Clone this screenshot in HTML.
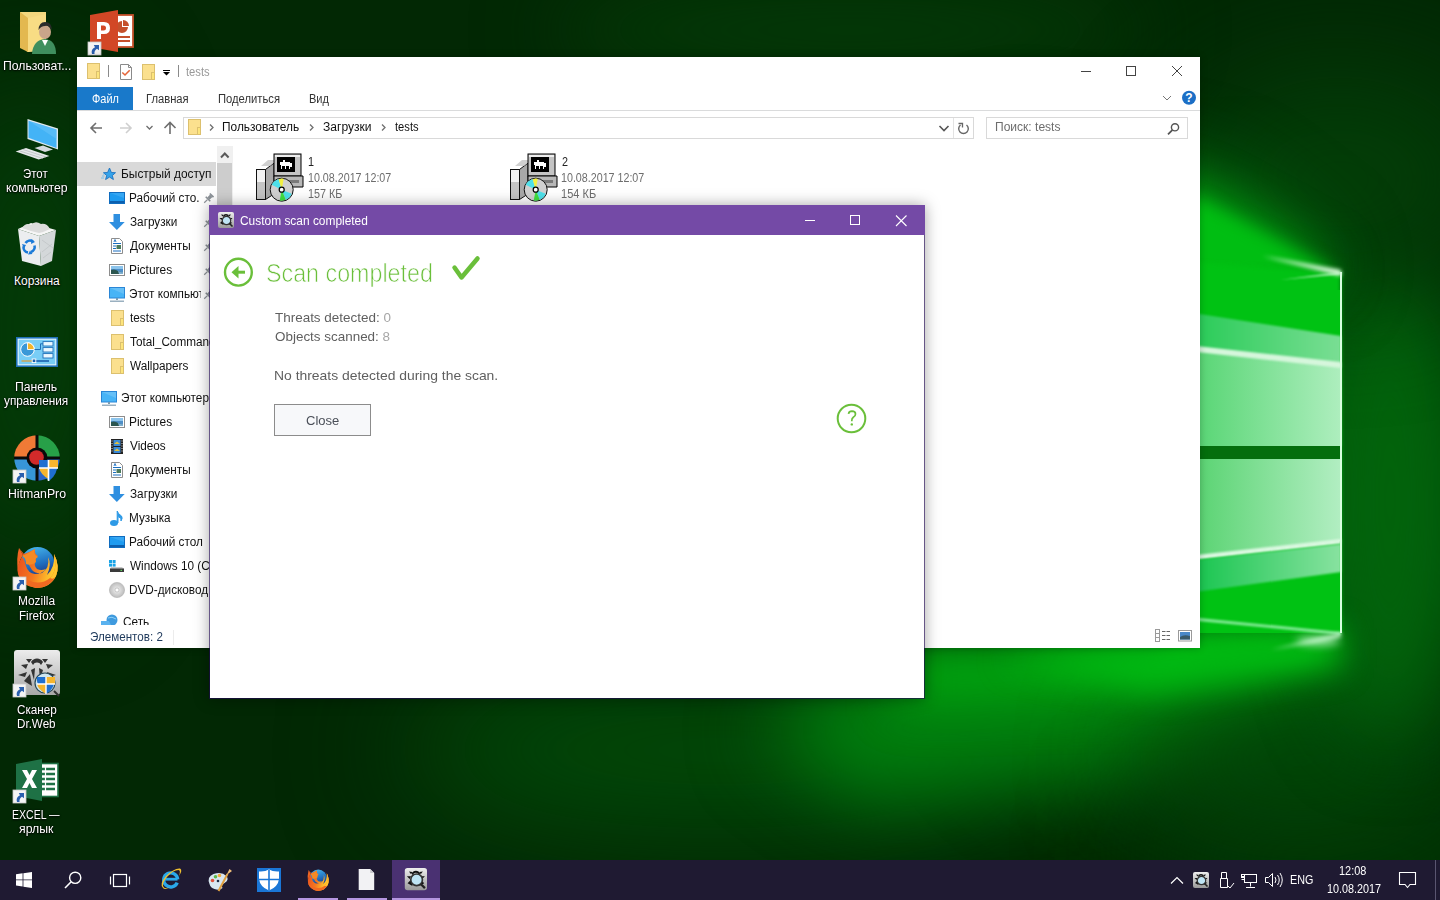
<!DOCTYPE html>
<html><head><meta charset="utf-8"><style>
*{margin:0;padding:0;box-sizing:border-box}
html,body{width:1440px;height:900px;overflow:hidden;background:#052808;font-family:"Liberation Sans",sans-serif}
.a{position:absolute}
.t{position:absolute;white-space:nowrap;line-height:1;transform-origin:0 0}
.dl{color:#fff;text-shadow:0 0 2px #000,0 1px 2px #000}
svg{position:absolute;overflow:visible}
</style></head><body>
<svg class="a" style="left:0;top:0" width="1440" height="900" viewBox="0 0 1440 900">
 <defs><filter id="b1" color-interpolation-filters="sRGB" filterUnits="userSpaceOnUse" x="-200" y="-200" width="1840" height="1300"><feGaussianBlur stdDeviation="1"/></filter><filter id="b2" color-interpolation-filters="sRGB" filterUnits="userSpaceOnUse" x="-200" y="-200" width="1840" height="1300"><feGaussianBlur stdDeviation="2"/></filter><filter id="b4" color-interpolation-filters="sRGB" filterUnits="userSpaceOnUse" x="-200" y="-200" width="1840" height="1300"><feGaussianBlur stdDeviation="4"/></filter><filter id="b8" color-interpolation-filters="sRGB" filterUnits="userSpaceOnUse" x="-200" y="-200" width="1840" height="1300"><feGaussianBlur stdDeviation="8"/></filter><filter id="b15" color-interpolation-filters="sRGB" filterUnits="userSpaceOnUse" x="-200" y="-200" width="1840" height="1300"><feGaussianBlur stdDeviation="15"/></filter><filter id="b25" color-interpolation-filters="sRGB" filterUnits="userSpaceOnUse" x="-200" y="-200" width="1840" height="1300"><feGaussianBlur stdDeviation="25"/></filter><filter id="b40" color-interpolation-filters="sRGB" filterUnits="userSpaceOnUse" x="-200" y="-200" width="1840" height="1300"><feGaussianBlur stdDeviation="40"/></filter><filter id="b60" color-interpolation-filters="sRGB" filterUnits="userSpaceOnUse" x="-200" y="-200" width="1840" height="1300"><feGaussianBlur stdDeviation="60"/></filter><filter id="b80" color-interpolation-filters="sRGB" filterUnits="userSpaceOnUse" x="-200" y="-200" width="1840" height="1300"><feGaussianBlur stdDeviation="80"/></filter>
  <linearGradient id="pane1" gradientUnits="userSpaceOnUse" x1="1200" y1="0" x2="1341" y2="0"><stop offset="0" stop-color="#5ad676"/><stop offset="1" stop-color="#aeeebe"/></linearGradient>
  <linearGradient id="band1" gradientUnits="userSpaceOnUse" x1="1200" y1="0" x2="1341" y2="0"><stop offset="0" stop-color="#2ccc5a"/><stop offset="1" stop-color="#7ade94"/></linearGradient>
  <linearGradient id="pane2" gradientUnits="userSpaceOnUse" x1="1200" y1="0" x2="1341" y2="0"><stop offset="0" stop-color="#5cd474"/><stop offset="1" stop-color="#b2eec2"/></linearGradient>
  <linearGradient id="band2" gradientUnits="userSpaceOnUse" x1="1200" y1="0" x2="1341" y2="0"><stop offset="0" stop-color="#1cc652"/><stop offset="1" stop-color="#88e2a0"/></linearGradient>
 </defs>
 <rect width="1440" height="900" fill="#022804"/>
 <ellipse cx="850" cy="30" rx="300" ry="45" fill="#043a07" filter="url(#b40)"/>
 <ellipse cx="30" cy="330" rx="90" ry="260" fill="#043c08" filter="url(#b60)"/>
 <ellipse cx="720" cy="750" rx="320" ry="80" fill="#024a08" filter="url(#b60)"/>
 <ellipse cx="1250" cy="520" rx="240" ry="240" fill="#025a0c" filter="url(#b80)"/>
 <polygon points="1341,636 1200,645 860,660 760,730 860,800 1120,780 1360,680" fill="#00800e" filter="url(#b40)"/>
 <polygon points="1341,636 1200,643 900,650 900,700 1250,690" fill="#00b010" filter="url(#b25)"/>
 <polygon points="1341,636 1180,644 1150,665 1300,660" fill="#00cc12" filter="url(#b8)"/>
 <ellipse cx="1360" cy="860" rx="220" ry="90" fill="#013204" filter="url(#b60)"/>
 <ellipse cx="1300" cy="760" rx="160" ry="60" fill="#024a08" filter="url(#b60)"/>
 <ellipse cx="1390" cy="500" rx="70" ry="240" fill="#02640c" filter="url(#b40)"/>
 <polygon points="1341,628 1341,668 1150,692 1000,660 1150,640" fill="#00b812" filter="url(#b15)"/>
 <ellipse cx="1340" cy="180" rx="160" ry="110" fill="#033e08" filter="url(#b60)"/>
 <polygon points="1341,272 1220,180 1000,130 1000,300" fill="#027c10" filter="url(#b40)"/>
 <polygon points="1341,274 1195,195 1000,140 1000,300" fill="#00b010" filter="url(#b25)"/>
 <polygon points="1341,274 1200,200 1100,200 1100,290" fill="#00be12" filter="url(#b8)"/>
 <polygon points="1000,250 1341,272 1341,633 1000,615" fill="#00c213" filter="url(#b2)"/>
 <rect x="1200" y="290" width="141" height="343" fill="#00c213"/>
 <polygon points="1000,283 1341,336 1341,446 1000,446" fill="url(#band1)" filter="url(#b1)"/>
 <polygon points="1000,329 1341,364 1341,446 1000,446" fill="url(#pane1)"/>
 <polygon points="1000,324 1341,362 1341,368 1000,330" fill="#d6f6dc" filter="url(#b1)"/>
 <polygon points="1000,459 1341,459 1341,541 1000,579" fill="url(#pane2)"/>
 <polygon points="1000,577 1341,539 1341,544 1000,582" fill="#dcf8e2" filter="url(#b1)"/>
 <polygon points="1000,582 1341,544 1341,572 1000,619" fill="url(#band2)" filter="url(#b1)"/>
 <rect x="1000" y="446" width="341" height="13" fill="#046e0d"/>
 <polygon points="1000,598 1341,632 1341,635 1000,602" fill="#7ce890" filter="url(#b1)"/>
 <rect x="1340" y="272" width="2" height="361" fill="#d8ffe0"/>
 <polygon points="1341,270 1262,256 1341,276" fill="#e8ffe8" filter="url(#b2)"/><polygon points="1341,272 1280,280 1341,274" fill="#c8f8d0" filter="url(#b1)"/>
 <ellipse cx="1318" cy="641" rx="22" ry="4" fill="#b8f0c0" filter="url(#b4)"/><polygon points="1341,633 1270,650 1341,637" fill="#d8ffe0" filter="url(#b2)"/>
</svg>
<svg class="a" style="left:0;top:0" width="1440" height="900"><g transform="translate(20,12)"><polygon points="0,0 26,0 26,38 7,40" fill="#f3d77e"/><polygon points="0,0 8,6 8,40 0,36" fill="#e3b850"/><polygon points="8,6 26,2 26,38 8,40" fill="#f8dc84"/><path d="M12 42 Q13 28 25 27 Q36 28 36 42Z" fill="#3f8f5e"/><path d="M22 28 L25 34 L28 28Z" fill="#fff"/><ellipse cx="25" cy="20" rx="6" ry="7" fill="#c9a58a"/><path d="M18.5 18 Q19 10 25 10 Q32 10 31.5 18 Q29 13 25 14 Q21 14 18.5 18Z" fill="#2b2b2b"/></g><g transform="translate(90,10)"><rect x="22" y="5" width="21" height="32" fill="#fff" stroke="#c5502b" stroke-width="1.8"/><path d="M32 11 A6 6 0 1 0 38 17 H32Z" fill="#c5502b"/><path d="M33 10 A6 6 0 0 1 39 16 H33Z" fill="#c5502b"/><path d="M26 27h14M26 31h14" stroke="#c5502b" stroke-width="1.8"/><polygon points="0,5 28,0 28,42 0,37" fill="#d24726"/><path d="M7 29 V12 H14 Q20 12 20 18 Q20 24 14 24 H11 V29Z M11 15.5 V20.5 H13.5 Q16 20.5 16 18 Q16 15.5 13.5 15.5Z" fill="#fff"/></g><g transform="translate(88,42) scale(1.0)"><rect x="0" y="0" width="13" height="13" fill="#f4f4f4" stroke="#c8c8c8" stroke-width=".8"/><path d="M4 12 Q2.5 7.5 7 5.2 L5.8 3 H11 V8.2 L9 6.8 Q6 8.5 6.5 12Z" fill="#2a5fae"/></g><g transform="translate(15,119)"><polygon points="12.5,0 43,9.5 43,30.5 12.5,20" fill="#dfe8ee"/><polygon points="13.5,1.8 41.5,10.6 41.5,29 13.5,18.8" fill="#43b3f6"/><polygon points="13.5,1.8 41.5,10.6 41.5,20 " fill="#6cc6fa" opacity=".5"/><polygon points="19.5,29 28,26.5 38,30.5 30,33" fill="#d6dade"/><polygon points="0.6,32.5 11,29 34.4,37 23.7,40.5" fill="#e6e8ea"/><path d="M5 32 L28 39.5 M8 30.5 L31 38" stroke="#aab0b4" stroke-width=".6"/></g><g transform="translate(0,0)"><polygon points="18,229 39,236 41,266 22,261" fill="#eceef0"/><polygon points="39,236 56,230 52,261 41,266" fill="#d4d8da"/><path d="M42 240 L53 248 M42 252 L52 244 M43 258 L51 252" stroke="#c0c4c6" stroke-width=".8"/><polygon points="18,229 31,223 56,230 39,236" fill="#f6f6f6"/><path d="M22 228 Q26 222 31 225 Q35 220 41 224 Q47 223 50 229 Q44 232 39 233 Q30 231 22 228Z" fill="#dcdcdc"/><path d="M25.5 243 A5.5 5.5 0 0 1 33 241.5" fill="none" stroke="#1a7ad8" stroke-width="2.6"/><path d="M34.5 245.5 A5.5 5.5 0 0 1 31 252" fill="none" stroke="#1a7ad8" stroke-width="2.6"/><path d="M28 252.5 A5.5 5.5 0 0 1 23.5 246.5" fill="none" stroke="#1a7ad8" stroke-width="2.6"/><path d="M31.5 239 L35 242 L31 244Z M32.5 254 L28 254.5 L30 250.5Z M22 244 L24 248.5 L26 245Z" fill="#1a7ad8"/></g><g transform="translate(16,337)"><rect x="0" y="0" width="42" height="30" fill="#1f70b8"/><rect x="2.2" y="2.2" width="37.6" height="25.6" fill="#78cdf6" stroke="#e0f6ff" stroke-width="1.2"/><circle cx="11.5" cy="12.5" r="6.8" fill="#3a98d8" stroke="#fff" stroke-width="1"/><path d="M11.5 12.5 V5.7 A6.8 6.8 0 0 1 18.3 12.5Z" fill="#f2b42a" stroke="#fff" stroke-width=".9"/><path d="M18.5 12.5 H24.5 V6.8 H27" fill="none" stroke="#1f70b8" stroke-width="1"/><rect x="27" y="4.6" width="10" height="4.4" fill="#eaf8ff" stroke="#1f70b8" stroke-width=".9"/><rect x="27" y="10.6" width="10" height="4.4" fill="#eaf8ff" stroke="#1f70b8" stroke-width=".9"/><rect x="27" y="16.6" width="10" height="4.4" fill="#eaf8ff" stroke="#1f70b8" stroke-width=".9"/><path d="M5.5 24 H16.5" stroke="#c8a860" stroke-width="1.6"/><path d="M19.5 24 H33" stroke="#1a60b0" stroke-width="1.6"/><rect x="16.2" y="22" width="3.6" height="3.6" fill="#1a60b0" stroke="#fff" stroke-width=".9"/></g><g transform="translate(14,435)"><path d="M23 23 V0.2 A22.8 22.8 0 0 0 0.2 23Z" fill="#f07a36"/><path d="M23 23 V0.2 A22.8 22.8 0 0 1 45.8 23Z" fill="#27a048"/><path d="M23 23 H0.2 A22.8 22.8 0 0 0 23 45.8Z" fill="#3795d8"/><path d="M23 23 H45.8 A22.8 22.8 0 0 1 23 45.8Z" fill="#2b66c8"/><path d="M23 0 V46 M0 23 H46" stroke="#0a0a0a" stroke-width="3"/><circle cx="23" cy="23" r="10.5" fill="#0a0a0a"/><circle cx="22.5" cy="22.5" r="7.3" fill="#d22a2a"/><path d="M25 25 H44 Q44 40 35 46 Q27 40 25 33Z" fill="#1f6fd0"/><path d="M34.5 25 H44 V33 H34.5Z M25 33 H34.5 V44 Q27 40 25 33Z" fill="#f6b52e"/><path d="M34.5 25 V46 M25 33 H44" stroke="#fff" stroke-width="1.6"/></g><g transform="translate(13,470) scale(1.0)"><rect x="0" y="0" width="13" height="13" fill="#f4f4f4" stroke="#c8c8c8" stroke-width=".8"/><path d="M4 12 Q2.5 7.5 7 5.2 L5.8 3 H11 V8.2 L9 6.8 Q6 8.5 6.5 12Z" fill="#2a5fae"/></g><g transform="translate(14,544)"><defs><linearGradient id="ffg" x1="0" y1="0" x2="1" y2=".3"><stop offset="0" stop-color="#e8481e"/><stop offset=".55" stop-color="#f47a20"/><stop offset="1" stop-color="#ffd02e"/></linearGradient><linearGradient id="ffb" x1="0" y1="0" x2=".3" y2="1"><stop offset="0" stop-color="#4cc0f2"/><stop offset=".6" stop-color="#1f6fc0"/><stop offset="1" stop-color="#1a2f80"/></linearGradient></defs><circle cx="23.5" cy="20" r="17" fill="url(#ffb)"/><path d="M5 4 L10 10 Q16 8 21 5 Q20 10 24 12 Q21 14 22 17 Q19 21 23 25 Q27 27 32 25 Q28 30 21 30 Q14 29 12 22 Q10 14 8 13 Q2 22 4 30 Q8 42 22 44 Q36 44 42 32 Q46 22 40 10 Q41 24 33 31 Q38 20 34 13 Q36 24 28 29 Q22 30 18 26" fill="url(#ffg)"/><path d="M4 30 Q8 42 22 44 Q36 44 42 32 Q46 22 40 10 Q44 26 36 34 Q26 42 14 36 Q6 32 4 30Z" fill="#f06a22"/><path d="M40 10 Q46 22 42 32 Q40 36 36 34 Q44 26 40 10Z" fill="#ffc62e"/><path d="M5 4 L9 11 Q4 18 4 28 Q2 14 5 4Z" fill="#f26522"/><path d="M21 5 Q19 11 24 13 Q20 15 22 18 Q18 22 12 20 Q12 13 8 12 Q15 9 21 5Z" fill="#f58a24"/></g><g transform="translate(13,577) scale(1.0)"><rect x="0" y="0" width="13" height="13" fill="#f4f4f4" stroke="#c8c8c8" stroke-width=".8"/><path d="M4 12 Q2.5 7.5 7 5.2 L5.8 3 H11 V8.2 L9 6.8 Q6 8.5 6.5 12Z" fill="#2a5fae"/></g><g transform="translate(14,650)"><defs><linearGradient id="dwg" x1="0" y1="0" x2="0" y2="1"><stop offset="0" stop-color="#ececec"/><stop offset="1" stop-color="#a8a8a8"/></linearGradient></defs><rect x="0" y="0" width="46" height="45" rx="3" fill="url(#dwg)"/><path d="M17 12 A7 7 0 0 1 29 12 L27 15 A4.5 4.5 0 0 0 19 15Z" fill="#333"/><path d="M12 9 L18 9 L15 13Z M28 9 L34 9 L31 13Z M7 15 L14 14 L12 19Z M32 14 L39 15 L34 19Z M4 25 L13 22 L11 27Z M33 22 L42 25 L35 27Z" fill="#333"/><path d="M10 31 L16 24 L18 36Z M36 31 L30 24 L28 36Z M17 20 L21 18 L20 30Z M29 20 L25 18 L26 30Z" fill="#333"/><circle cx="31" cy="33" r="10" fill="#cfe6f0" stroke="#2a4a5a" stroke-width="1.2"/><path d="M23 27 H41 Q41 39 32 44 Q24 39 23 31Z" fill="#1f6fd0"/><path d="M32 27 H41 V34 H32Z M23 34 H32 V44 Q24 39 23 34Z" fill="#f6b52e"/><path d="M32 27 V44 M23 34 H41" stroke="#fff" stroke-width="1.4"/><path d="M40 41 L45 46" stroke="#333" stroke-width="2"/></g><g transform="translate(13,684) scale(1.0)"><rect x="0" y="0" width="13" height="13" fill="#f4f4f4" stroke="#c8c8c8" stroke-width=".8"/><path d="M4 12 Q2.5 7.5 7 5.2 L5.8 3 H11 V8.2 L9 6.8 Q6 8.5 6.5 12Z" fill="#2a5fae"/></g><g transform="translate(16,759)"><rect x="22" y="4.5" width="20" height="33" fill="#fff" stroke="#1e7145" stroke-width="1.6"/><path d="M25 10h14M25 15h14M25 20h14M25 25h14M25 30h14" stroke="#1e7145" stroke-width="2.4"/><path d="M29.5 8V33" stroke="#fff" stroke-width="1.2"/><polygon points="0,5 26,0 26,42 0,37" fill="#1e7145"/><path d="M6 11 H11 L13.5 16 L16 11 H21 L16 20 L21 29 H16 L13.5 24 L11 29 H6 L11 20Z" fill="#fff"/></g><g transform="translate(13,790) scale(1.0)"><rect x="0" y="0" width="13" height="13" fill="#f4f4f4" stroke="#c8c8c8" stroke-width=".8"/><path d="M4 12 Q2.5 7.5 7 5.2 L5.8 3 H11 V8.2 L9 6.8 Q6 8.5 6.5 12Z" fill="#2a5fae"/></g></svg>
<div class="dl"><div class='t' style='left:3.38px;top:60.00px;font-size:12px;color:#fff;font-weight:400;transform:scaleX(1.0185);'>Пользоват...</div>
<div class='t' style='left:23.05px;top:168.00px;font-size:12px;color:#fff;font-weight:400;transform:scaleX(0.9520);'>Этот</div>
<div class='t' style='left:5.60px;top:182.00px;font-size:12px;color:#fff;font-weight:400;transform:scaleX(1.0183);'>компьютер</div>
<div class='t' style='left:14.00px;top:274.50px;font-size:12px;color:#fff;font-weight:400;transform:scaleX(1.0000);'>Корзина</div>
<div class='t' style='left:14.98px;top:381.00px;font-size:12px;color:#fff;font-weight:400;transform:scaleX(1.0175);'>Панель</div>
<div class='t' style='left:4.00px;top:395.00px;font-size:12px;color:#fff;font-weight:400;transform:scaleX(0.9815);'>управления</div>
<div class='t' style='left:7.88px;top:488.00px;font-size:12px;color:#fff;font-weight:400;transform:scaleX(1.0232);'>HitmanPro</div>
<div class='t' style='left:17.91px;top:595.00px;font-size:12px;color:#fff;font-weight:400;transform:scaleX(0.9919);'>Mozilla</div>
<div class='t' style='left:18.63px;top:610.00px;font-size:12px;color:#fff;font-weight:400;transform:scaleX(0.9667);'>Firefox</div>
<div class='t' style='left:17.30px;top:703.50px;font-size:12px;color:#fff;font-weight:400;transform:scaleX(0.9756);'>Сканер</div>
<div class='t' style='left:16.83px;top:718.00px;font-size:12px;color:#fff;font-weight:400;transform:scaleX(0.9692);'>Dr.Web</div>
<div class='t' style='left:12.42px;top:809.00px;font-size:12px;color:#fff;font-weight:400;transform:scaleX(0.8778);'>EXCEL —</div>
<div class='t' style='left:19.30px;top:823.00px;font-size:12px;color:#fff;font-weight:400;transform:scaleX(1.0206);'>ярлык</div></div>
<div class="a" style="left:77px;top:57px;width:1123px;height:591px;background:#fff;box-shadow:0 0 7px rgba(0,0,0,.25)"></div>
<div class="a" style="left:77px;top:87px;width:56px;height:23px;background:#1979ca"></div>
<div class="a" style="left:77px;top:110px;width:1123px;height:1px;background:#dadbdc"></div>
<div class="a" style="left:183px;top:117px;width:791px;height:22px;border:1px solid #d9d9d9"></div>
<div class="a" style="left:953px;top:118px;width:1px;height:20px;background:#e3e3e3"></div>
<div class="a" style="left:986px;top:117px;width:202px;height:22px;border:1px solid #d9d9d9"></div>
<div class="a" style="left:77px;top:162px;width:139px;height:24px;background:#d9d9d9"></div>
<div class="a" style="left:217px;top:146px;width:16px;height:479px;background:#f0f0f0"></div>
<div class="a" style="left:217px;top:163px;width:15px;height:90px;background:#cdcdcd"></div>
<svg class="a" style="left:0;top:0" width="1440" height="900"><g clip-path="url(#navclip)"><rect x="87.5" y="63.5" width="12" height="15" fill="#fbe08e" stroke="#dcc06e"/><rect x="96.5" y="71.5" width="3" height="7" fill="#fde57c" stroke="#dcc06e"/><path d="M108.5 65V77 M178.5 65V77" stroke="#8a8a8a" stroke-width="1"/><path d="M120.5 64.5H128.5L131.5 67.5V79.5H120.5Z" fill="#fff" stroke="#8a8a8a"/><path d="M128.5 64.5V67.5H131.5" fill="none" stroke="#8a8a8a"/><path d="M122.3 72.5L125 75L129.7 70.3" fill="none" stroke="#e5663a" stroke-width="1.6"/><rect x="142.5" y="64.5" width="12" height="15" fill="#fbe08e" stroke="#dcc06e"/><rect x="151.5" y="72.5" width="3" height="7" fill="#fde57c" stroke="#dcc06e"/><path d="M163 70.5H170" stroke="#000"/><path d="M163 72H170L166.5 75.5Z" fill="#000"/><path d="M1081 71.5H1091" stroke="#444"/><rect x="1126.5" y="66.5" width="9" height="9" fill="none" stroke="#444"/><path d="M1172 66L1182 76M1182 66L1172 76" stroke="#444" stroke-width="1"/><path d="M1163 96L1167 100L1171 96" fill="none" stroke="#777" stroke-width="1"/><circle cx="1189" cy="97.8" r="7" fill="#1c6fc6"/><text x="1189" y="102.3" font-family="Liberation Sans" font-weight="700" font-size="12" fill="#fff" text-anchor="middle">?</text><path d="M102 128H91M96 123L91 128L96 133" fill="none" stroke="#6e6e6e" stroke-width="1.6"/><path d="M120 128H131M126 123L131 128L126 133" fill="none" stroke="#cfcfcf" stroke-width="1.6"/><path d="M146.5 126L149.5 129L152.5 126" fill="none" stroke="#6e6e6e" stroke-width="1.3"/><path d="M170 134V122.5M164.5 128L170 122.5L175.5 128" fill="none" stroke="#6e6e6e" stroke-width="1.6"/><rect x="188.5" y="119.5" width="12" height="15" fill="#fbe08e" stroke="#dcc06e"/><rect x="197.5" y="127.5" width="3" height="7" fill="#fde57c" stroke="#dcc06e"/><path d="M210.0 124.5L213.0 127.5L210.0 130.5" fill="none" stroke="#707070" stroke-width="1.3"/><path d="M310.0 124.5L313.0 127.5L310.0 130.5" fill="none" stroke="#707070" stroke-width="1.3"/><path d="M382.0 124.5L385.0 127.5L382.0 130.5" fill="none" stroke="#707070" stroke-width="1.3"/><path d="M939.5 126L944 130.5L948.5 126" fill="none" stroke="#555" stroke-width="1.6"/><path d="M960.5 125A4.8 4.8 0 1 0 966.5 125" fill="none" stroke="#666" stroke-width="1.4"/><path d="M958.5 123.5H962.5V127.5" fill="none" stroke="#666" stroke-width="1.3"/><circle cx="1175" cy="127.3" r="3.6" fill="none" stroke="#555" stroke-width="1.4"/><path d="M1172.5 129.8L1168 134.3" stroke="#555" stroke-width="1.8"/><path d="M221 157.5L224.8 153.5L228.6 157.5" fill="none" stroke="#5a5a5a" stroke-width="2"/><g transform="translate(101,167.5)"><path d="M8.5 0.5 L10.4 5 L14.5 5.2 L11.3 8 L12.4 12 L8.5 9.6 L4.6 12 L5.7 8 L2.5 5.2 L6.6 5Z" fill="#35a3ea" stroke="#1c72c0" stroke-width="0.9"/><path d="M0 10.5h3 M1 8.5h2.5 M2 6.5h1.5" stroke="#5eb8f0" stroke-width="0.8"/></g><g transform="translate(109,192)"><rect x=".5" y=".5" width="15" height="11" fill="#1e9bf0" stroke="#0f6cbf"/><rect x="1" y="9" width="14" height="2" fill="#0c5fae"/><path d="M1 1 L15 1 L15 6 Z" fill="#4db4f5" opacity=".5"/></g><g transform="translate(208,199) rotate(45)" fill="#8c9298"><rect x="-2.6" y="-6" width="5.2" height="1.6"/><rect x="-1.6" y="-4.6" width="3.2" height="4"/><rect x="-3.2" y="-0.8" width="6.4" height="1.6"/><rect x="-0.6" y="0.8" width="1.2" height="4.5"/></g><g transform="translate(208,223) rotate(45)" fill="#8c9298"><rect x="-2.6" y="-6" width="5.2" height="1.6"/><rect x="-1.6" y="-4.6" width="3.2" height="4"/><rect x="-3.2" y="-0.8" width="6.4" height="1.6"/><rect x="-0.6" y="0.8" width="1.2" height="4.5"/></g><g transform="translate(208,247) rotate(45)" fill="#8c9298"><rect x="-2.6" y="-6" width="5.2" height="1.6"/><rect x="-1.6" y="-4.6" width="3.2" height="4"/><rect x="-3.2" y="-0.8" width="6.4" height="1.6"/><rect x="-0.6" y="0.8" width="1.2" height="4.5"/></g><g transform="translate(208,271) rotate(45)" fill="#8c9298"><rect x="-2.6" y="-6" width="5.2" height="1.6"/><rect x="-1.6" y="-4.6" width="3.2" height="4"/><rect x="-3.2" y="-0.8" width="6.4" height="1.6"/><rect x="-0.6" y="0.8" width="1.2" height="4.5"/></g><g transform="translate(208,295) rotate(45)" fill="#8c9298"><rect x="-2.6" y="-6" width="5.2" height="1.6"/><rect x="-1.6" y="-4.6" width="3.2" height="4"/><rect x="-3.2" y="-0.8" width="6.4" height="1.6"/><rect x="-0.6" y="0.8" width="1.2" height="4.5"/></g><g transform="translate(109,214)"><path d="M4.5 0 H11 V8 H15.7 L7.85 16 L0 8 H4.5Z" fill="#2f8fe0"/></g><g transform="translate(111,238)"><path d="M.5 .5 H8.5 L11.5 3.5 V15.5 H.5Z" fill="#fff" stroke="#8d8d8d"/><path d="M2 5.5h8 M2 8h3 M2 10.5h3 M2 13h8" stroke="#1b6fc1" stroke-width="1"/><rect x="5.5" y="7" width="4.5" height="4" fill="#4a7a5a"/><path d="M3 4 L4 1.5 L5 4" stroke="#1b6fc1" fill="none" stroke-width=".9"/></g><g transform="translate(109,264)"><rect x=".5" y=".5" width="15" height="11" fill="#fff" stroke="#8d8d8d"/><rect x="2" y="2" width="12" height="8" fill="#4f8fc8"/><rect x="2" y="2" width="12" height="3" fill="#8cc4ec"/><path d="M2 6 Q6 4.5 9 7 Q12 8.5 14 8 V10 H2Z" fill="#2c5650"/><path d="M9 7 Q12 8.5 14 8 V10 H10Z" fill="#7fb0d0"/></g><g transform="translate(109,287)"><rect x=".5" y=".5" width="15" height="10.5" fill="#48b4f6" stroke="#2a86d6"/><path d="M1 1 L15 1 L15 7Z" fill="#7cc8f8" opacity=".6"/><rect x="7" y="11" width="2" height="2" fill="#7a9ab0"/><rect x="1" y="13.5" width="14" height="1.5" fill="#9ab0c0"/></g><rect x="111.5" y="310.5" width="12" height="15" fill="#fbe08e" stroke="#dcc06e"/><rect x="120.5" y="318.5" width="3" height="7" fill="#fde57c" stroke="#dcc06e"/><rect x="111.5" y="334.5" width="12" height="15" fill="#fbe08e" stroke="#dcc06e"/><rect x="120.5" y="342.5" width="3" height="7" fill="#fde57c" stroke="#dcc06e"/><rect x="111.5" y="358.5" width="12" height="15" fill="#fbe08e" stroke="#dcc06e"/><rect x="120.5" y="366.5" width="3" height="7" fill="#fde57c" stroke="#dcc06e"/><g transform="translate(101,391)"><rect x=".5" y=".5" width="15" height="10.5" fill="#48b4f6" stroke="#2a86d6"/><path d="M1 1 L15 1 L15 7Z" fill="#7cc8f8" opacity=".6"/><rect x="7" y="11" width="2" height="2" fill="#7a9ab0"/><rect x="1" y="13.5" width="14" height="1.5" fill="#9ab0c0"/></g><g transform="translate(109,416)"><rect x=".5" y=".5" width="15" height="11" fill="#fff" stroke="#8d8d8d"/><rect x="2" y="2" width="12" height="8" fill="#4f8fc8"/><rect x="2" y="2" width="12" height="3" fill="#8cc4ec"/><path d="M2 6 Q6 4.5 9 7 Q12 8.5 14 8 V10 H2Z" fill="#2c5650"/><path d="M9 7 Q12 8.5 14 8 V10 H10Z" fill="#7fb0d0"/></g><g transform="translate(109,439)"><rect x="2" y="0" width="12" height="15" fill="#222"/><rect x="4.5" y="1" width="7" height="6" fill="#3a8ad8"/><rect x="4.5" y="8" width="7" height="6" fill="#3a8ad8"/><path d="M5 5 L8 2.5 L11 5Z M5 12 L8 9.5 L11 12Z" fill="#e0c040"/><path d="M3 1.5v12 M13 1.5v12" stroke="#ddd" stroke-width="1" stroke-dasharray="1 1.5"/></g><g transform="translate(111,462)"><path d="M.5 .5 H8.5 L11.5 3.5 V15.5 H.5Z" fill="#fff" stroke="#8d8d8d"/><path d="M2 5.5h8 M2 8h3 M2 10.5h3 M2 13h8" stroke="#1b6fc1" stroke-width="1"/><rect x="5.5" y="7" width="4.5" height="4" fill="#4a7a5a"/><path d="M3 4 L4 1.5 L5 4" stroke="#1b6fc1" fill="none" stroke-width=".9"/></g><g transform="translate(109,486)"><path d="M4.5 0 H11 V8 H15.7 L7.85 16 L0 8 H4.5Z" fill="#2f8fe0"/></g><g transform="translate(109,510)"><ellipse cx="5" cy="13" rx="4" ry="3" fill="#2e9ae6"/><path d="M8.2 13 V1 Q9 4 12.5 6 Q14 8 12 11 Q13 8 9 6.5 V13" fill="#2e9ae6" stroke="#2e9ae6" stroke-width="1"/></g><g transform="translate(109,536)"><rect x=".5" y=".5" width="15" height="11" fill="#1e9bf0" stroke="#0f6cbf"/><rect x="1" y="9" width="14" height="2" fill="#0c5fae"/><path d="M1 1 L15 1 L15 6 Z" fill="#4db4f5" opacity=".5"/></g><g transform="translate(109,560)"><rect x="0" y="0" width="3" height="3" fill="#19a3e6"/><rect x="3.6" y="0" width="3" height="3" fill="#19a3e6"/><rect x="0" y="3.6" width="3" height="3" fill="#19a3e6"/><rect x="3.6" y="3.6" width="3" height="3" fill="#19a3e6"/><path d="M2 7 H13 L15 9 H1Z" fill="#c8c8c8"/><rect x="1" y="8.5" width="14" height="3.5" fill="#3a3a3a"/><rect x="11.5" y="9.8" width="1.5" height="1.2" fill="#5ed05e"/></g><g transform="translate(109,582)"><defs><radialGradient id="dvdg"><stop offset="0" stop-color="#f4f4f4"/><stop offset="1" stop-color="#bcbcbc"/></radialGradient></defs><circle cx="8" cy="8" r="7.6" fill="url(#dvdg)" stroke="#b0b0b0" stroke-width=".6"/><circle cx="8" cy="8" r="2" fill="#fff" stroke="#aaa" stroke-width=".6"/></g><g clip-path="url(#netclip)"><g transform="translate(101,614)"><circle cx="11" cy="6" r="5.5" fill="#3f9ade"/><path d="M7 4 Q11 2 15 5" stroke="#8cd0f8" fill="none"/><path d="M0 7 H8 L10 11 H0Z" fill="#5ab2ef"/><rect x="0" y="11" width="12" height="1.5" fill="#1f6fb8"/></g></g><polygon points="255,166 260,166 266,160 275,160 275,166 274,200 255,200" fill="#fff"/><rect x="256.5" y="169.5" width="9" height="30" fill="#f2f2f2" stroke="#111" stroke-width="1"/><rect x="257" y="182" width="8" height="17" fill="#c4c4c4"/><polygon points="265.5,169.5 274,163 274,194 265.5,199.5" fill="#a8a8a8" stroke="#111" stroke-width="1"/><polygon points="255,166 261,166 268,160 276,160 270,166" fill="#d0d0d0"/><rect x="274" y="154" width="27" height="22" fill="#c4c4c4" stroke="#000" stroke-width="1"/><rect x="275" y="155" width="25" height="2" fill="#eee"/><rect x="277" y="157" width="18" height="15" fill="#000"/><path d="M280 162h3v-2h2v2h5v1h2v4h-2v2h-1v-3h-3v3h-1v-3h-3v3h-1v-4h-1z" fill="#fff"/><polygon points="274,176 303,176 303,187 291,187 291,184 274,184" fill="#b8b8b8" stroke="#000" stroke-width="1"/><rect x="285" y="180" width="14" height="3" fill="#7a7a7a"/><circle cx="281.7" cy="189.7" r="11.5" fill="#d0d0d0" stroke="#111" stroke-width="1"/><path d="M281.7 189.7 L271.7 184.7 A11 11 0 0 1 278.7 179.2Z" fill="#4ee0ea"/><path d="M281.7 189.7 L278.7 179.2 A11 11 0 0 1 283.7 178.7Z" fill="#f2f040"/><path d="M281.7 189.7 L291.7 193.7 A11 11 0 0 1 285.7 199.7Z" fill="#4ee0ea"/><path d="M281.7 189.7 L285.7 199.7 A11 11 0 0 1 279.7 200.7Z" fill="#3ee040"/><circle cx="281.7" cy="189.7" r="2.5" fill="#fff" stroke="#000" stroke-width="1.2"/><polygon points="509,166 514,166 520,160 529,160 529,166 528,200 509,200" fill="#fff"/><rect x="510.5" y="169.5" width="9" height="30" fill="#f2f2f2" stroke="#111" stroke-width="1"/><rect x="511" y="182" width="8" height="17" fill="#c4c4c4"/><polygon points="519.5,169.5 528,163 528,194 519.5,199.5" fill="#a8a8a8" stroke="#111" stroke-width="1"/><polygon points="509,166 515,166 522,160 530,160 524,166" fill="#d0d0d0"/><rect x="528" y="154" width="27" height="22" fill="#c4c4c4" stroke="#000" stroke-width="1"/><rect x="529" y="155" width="25" height="2" fill="#eee"/><rect x="531" y="157" width="18" height="15" fill="#000"/><path d="M534 162h3v-2h2v2h5v1h2v4h-2v2h-1v-3h-3v3h-1v-3h-3v3h-1v-4h-1z" fill="#fff"/><polygon points="528,176 557,176 557,187 545,187 545,184 528,184" fill="#b8b8b8" stroke="#000" stroke-width="1"/><rect x="539" y="180" width="14" height="3" fill="#7a7a7a"/><circle cx="535.7" cy="189.7" r="11.5" fill="#d0d0d0" stroke="#111" stroke-width="1"/><path d="M535.7 189.7 L525.7 184.7 A11 11 0 0 1 532.7 179.2Z" fill="#4ee0ea"/><path d="M535.7 189.7 L532.7 179.2 A11 11 0 0 1 537.7 178.7Z" fill="#f2f040"/><path d="M535.7 189.7 L545.7 193.7 A11 11 0 0 1 539.7 199.7Z" fill="#4ee0ea"/><path d="M535.7 189.7 L539.7 199.7 A11 11 0 0 1 533.7 200.7Z" fill="#3ee040"/><circle cx="535.7" cy="189.7" r="2.5" fill="#fff" stroke="#000" stroke-width="1.2"/><path d="M173.5 630V645" stroke="#ececec"/><rect x="1155.5" y="629.5" width="4" height="12" fill="#fff" stroke="#9a9a9a"/><path d="M1155.5 633.5h4M1155.5 637.5h4" stroke="#9a9a9a"/><path d="M1162 631.5h3.5M1166.5 631.5h3.5M1162 635.5h3.5M1166.5 635.5h3.5M1162 639.5h3.5M1166.5 639.5h3.5" stroke="#666" stroke-width="1"/><rect x="1178.5" y="630.5" width="13" height="10.5" fill="#fff" stroke="#9a9a9a"/><rect x="1180" y="632" width="10" height="7.5" fill="#4a88c8"/><path d="M1180 637 Q1184 634 1190 636V639.5H1180Z" fill="#3a5a6a"/></g><defs><clipPath id="navclip"><rect x="77" y="57" width="1123" height="591"/></clipPath><clipPath id="netclip"><rect x="77" y="146" width="140" height="479"/></clipPath></defs></svg>
<div class='t' style='left:186.40px;top:66.00px;font-size:12px;color:#999;font-weight:400;transform:scaleX(0.9360);'>tests</div>
<div class='t' style='left:91.80px;top:93.00px;font-size:12px;color:#fff;font-weight:400;transform:scaleX(0.9103);'>Файл</div>
<div class='t' style='left:146.47px;top:93.00px;font-size:12px;color:#333;font-weight:400;transform:scaleX(0.9341);'>Главная</div>
<div class='t' style='left:217.76px;top:93.00px;font-size:12px;color:#333;font-weight:400;transform:scaleX(0.9354);'>Поделиться</div>
<div class='t' style='left:308.58px;top:93.00px;font-size:12px;color:#333;font-weight:400;transform:scaleX(0.9190);'>Вид</div>
<div class='t' style='left:222.26px;top:121.00px;font-size:12px;color:#111;font-weight:400;transform:scaleX(0.9903);'>Пользователь</div>
<div class='t' style='left:323.25px;top:121.00px;font-size:12px;color:#111;font-weight:400;transform:scaleX(1.0052);'>Загрузки</div>
<div class='t' style='left:395.00px;top:121.00px;font-size:12px;color:#111;font-weight:400;transform:scaleX(0.9300);'>tests</div>
<div class='t' style='left:994.50px;top:121.00px;font-size:12px;color:#6d6d6d;font-weight:400;transform:scaleX(1.0031);'>Поиск: tests</div>
<div class='t' style='left:308.10px;top:156.00px;font-size:12px;color:#222;font-weight:400;transform:scaleX(0.9000);'>1</div>
<div class='t' style='left:308.11px;top:172.00px;font-size:12px;color:#6d6d6d;font-weight:400;transform:scaleX(0.8913);'>10.08.2017 12:07</div>
<div class='t' style='left:308.10px;top:188.00px;font-size:12px;color:#6d6d6d;font-weight:400;transform:scaleX(0.8973);'>157 КБ</div>
<div class='t' style='left:562.00px;top:156.00px;font-size:12px;color:#222;font-weight:400;transform:scaleX(0.9000);'>2</div>
<div class='t' style='left:561.11px;top:172.00px;font-size:12px;color:#6d6d6d;font-weight:400;transform:scaleX(0.8913);'>10.08.2017 12:07</div>
<div class='t' style='left:561.08px;top:188.00px;font-size:12px;color:#6d6d6d;font-weight:400;transform:scaleX(0.9189);'>154 КБ</div>
<div class='t' style='left:90.33px;top:631.00px;font-size:12px;color:#1e395b;font-weight:400;transform:scaleX(0.9689);'>Элементов: 2</div>
<div class="a" style="left:0;top:0;width:1440px;height:900px;clip-path:inset(146px 1224px 275px 77px)"><div class='t' style='left:121.31px;top:168.00px;font-size:12px;color:#111;font-weight:400;transform:scaleX(0.9933);'>Быстрый доступ</div>
<div class='t' style='left:130.30px;top:312.00px;font-size:12px;color:#111;font-weight:400;transform:scaleX(0.9800);'>tests</div>
<div class='t' style='left:130.30px;top:336.00px;font-size:12px;color:#111;font-weight:400;transform:scaleX(0.9800);'>Total_Commander</div>
<div class='t' style='left:130.30px;top:360.00px;font-size:12px;color:#111;font-weight:400;transform:scaleX(0.9800);'>Wallpapers</div>
<div class='t' style='left:121.32px;top:392.00px;font-size:12px;color:#111;font-weight:400;transform:scaleX(0.9800);'>Этот компьютер</div>
<div class='t' style='left:129.30px;top:416.00px;font-size:12px;color:#111;font-weight:400;transform:scaleX(0.9952);'>Pictures</div>
<div class='t' style='left:130.30px;top:440.00px;font-size:12px;color:#111;font-weight:400;transform:scaleX(0.9800);'>Videos</div>
<div class='t' style='left:130.30px;top:464.00px;font-size:12px;color:#111;font-weight:400;transform:scaleX(0.9800);'>Документы</div>
<div class='t' style='left:130.30px;top:488.00px;font-size:12px;color:#111;font-weight:400;transform:scaleX(0.9800);'>Загрузки</div>
<div class='t' style='left:129.32px;top:512.00px;font-size:12px;color:#111;font-weight:400;transform:scaleX(0.9800);'>Музыка</div>
<div class='t' style='left:129.32px;top:536.00px;font-size:12px;color:#111;font-weight:400;transform:scaleX(0.9800);'>Рабочий стол</div>
<div class='t' style='left:130.30px;top:560.00px;font-size:12px;color:#111;font-weight:400;transform:scaleX(0.9800);'>Windows 10 (C:)</div>
<div class='t' style='left:129.32px;top:584.00px;font-size:12px;color:#111;font-weight:400;transform:scaleX(0.9800);'>DVD-дисковод (D:)</div>
<div class='t' style='left:122.60px;top:616.00px;font-size:12px;color:#111;font-weight:400;transform:scaleX(0.9800);'>Сеть</div></div>
<div class="a" style="left:0;top:0;width:1440px;height:900px;clip-path:inset(146px 1239px 275px 77px)"><div class='t' style='left:129.32px;top:192.00px;font-size:12px;color:#111;font-weight:400;transform:scaleX(0.9800);'>Рабочий сто.</div>
<div class='t' style='left:130.30px;top:216.00px;font-size:12px;color:#111;font-weight:400;transform:scaleX(0.9800);'>Загрузки</div>
<div class='t' style='left:130.30px;top:240.00px;font-size:12px;color:#111;font-weight:400;transform:scaleX(0.9800);'>Документы</div>
<div class='t' style='left:129.30px;top:264.00px;font-size:12px;color:#111;font-weight:400;transform:scaleX(0.9952);'>Pictures</div>
<div class='t' style='left:129.32px;top:288.00px;font-size:12px;color:#111;font-weight:400;transform:scaleX(0.9800);'>Этот компьютер</div></div>
<div class="a" style="left:209px;top:205px;width:716px;height:494px;background:#fff;background-clip:padding-box;border:1px solid rgba(33,7,87,.6);border-top:0;box-shadow:0 0 14px rgba(0,0,0,.35)"></div>
<div class="a" style="left:209px;top:205px;width:716px;height:30px;background:#744aa6"></div>
<div class="a" style="left:274px;top:404px;width:97px;height:32px;border:1px solid #8c8c8c;background:#f7f8fa"></div>
<svg class="a" style="left:0;top:0" width="1440" height="900"><g transform="translate(218,212) scale(1.0)"><defs><linearGradient id="dws218" x1="0" y1="0" x2="0" y2="1"><stop offset="0" stop-color="#eeeeee"/><stop offset="1" stop-color="#9a9a9a"/></linearGradient></defs><rect x="0" y="0" width="16" height="16" rx="2" fill="url(#dws218)"/><path d="M5 4 A3.2 3.2 0 0 1 11 4 L10 5.5 A2 2 0 0 0 6 5.5Z M3 2.5 L5.5 2.8 L4.5 4.5Z M13 2.5 L10.5 2.8 L11.5 4.5Z M1.5 6 L4.5 6 L3.5 8Z M14.5 6 L11.5 6 L12.5 8Z M2 11 L5 8 L5.5 13Z M14 11 L11 8 L10.5 13Z" fill="#111"/><circle cx="8.5" cy="8.5" r="4.2" fill="#bfe4f4" stroke="#333" stroke-width="1.2"/><path d="M11.5 11.5 L14.5 14.5" stroke="#222" stroke-width="1.6"/></g><path d="M805 220.5H815" stroke="#fff" stroke-width="1"/><rect x="850.5" y="215.5" width="9" height="9" fill="none" stroke="#fff"/><path d="M896 215.5L906.5 226M906.5 215.5L896 226" stroke="#fff" stroke-width="1.1"/><circle cx="238.4" cy="272.2" r="13.4" fill="none" stroke="#6abf3a" stroke-width="2.4"/><path d="M245 272.2H235" stroke="#6abf3a" stroke-width="3"/><path d="M231.5 272.2L238.5 266V278.4Z" fill="#6abf3a"/><path d="M454.5 267.5L461.5 277.5L477.5 258.5" fill="none" stroke="#6abf3a" stroke-width="4.5" stroke-linecap="round" stroke-linejoin="round"/><circle cx="851.5" cy="418.5" r="13.8" fill="none" stroke="#6abf3a" stroke-width="2"/><path d="M848.5 413.8Q849 411.2 852 411.2Q855.5 411.3 855.5 414Q855.5 416 853.3 417.3Q851.7 418.3 851.7 421.3" fill="none" stroke="#6abf3a" stroke-width="1.7"/><circle cx="851.8" cy="424.4" r="1.2" fill="#6abf3a"/></svg>
<div class='t' style='left:239.70px;top:215.00px;font-size:12.5px;color:#fff;font-weight:400;transform:scaleX(0.9537);'>Custom scan completed</div>
<div class='t' style='left:266.17px;top:261.00px;font-size:25px;color:#6abf3a;font-weight:400;transform:scaleX(0.9311);-webkit-text-stroke:0.7px #fff;'>Scan completed</div>
<div class='t' style='left:274.70px;top:311.00px;font-size:13.3px;color:#5f5f5f;font-weight:400;transform:scaleX(1.0114);'>Threats detected: <span style='color:#a6a6a6'>0</span></div>
<div class='t' style='left:274.50px;top:330.00px;font-size:13.3px;color:#5f5f5f;font-weight:400;transform:scaleX(1.0106);'>Objects scanned: <span style='color:#a6a6a6'>8</span></div>
<div class='t' style='left:273.65px;top:369.00px;font-size:13.3px;color:#5f5f5f;font-weight:400;transform:scaleX(1.0460);'>No threats detected during the scan.</div>
<div class='t' style='left:305.70px;top:414.00px;font-size:13.4px;color:#4a4f58;font-weight:400;transform:scaleX(0.9721);'>Close</div>
<div class="a" style="left:0;top:860px;width:1440px;height:40px;background:#1f1a32"></div>
<div class="a" style="left:392px;top:860px;width:48px;height:40px;background:#4a3172"></div>
<div class="a" style="left:298px;top:898px;width:40px;height:2px;background:#b596e0"></div>
<div class="a" style="left:347px;top:898px;width:40px;height:2px;background:#b596e0"></div>
<div class="a" style="left:392px;top:898px;width:48px;height:2px;background:#b596e0"></div>
<svg class="a" style="left:0;top:0" width="1440" height="900"><g transform="translate(16,872)" fill="#fff"><path d="M0 2.3 L6.6 1.3 V7.4 H0Z M7.4 1.2 L16 0 V7.4 H7.4Z M0 8.3 H6.6 V14.6 L0 13.6Z M7.4 8.3 H16 V16 L7.4 14.7Z"/></g><circle cx="75.2" cy="877.8" r="5.6" fill="none" stroke="#fff" stroke-width="1.4"/><path d="M71.2 881.8L65 888" stroke="#fff" stroke-width="1.6"/><rect x="113.5" y="874.5" width="13" height="12" fill="none" stroke="#fff" stroke-width="1.2"/><path d="M110.5 876.5V884.5M129.5 876.5V884.5" stroke="#fff" stroke-width="1.2"/><g transform="translate(159,867)"><path d="M18.2 15.6 A7 7 0 1 1 18.7 12.4" fill="none" stroke="#2aa8ea" stroke-width="3.4"/><path d="M6 12.2 H18.5" stroke="#2aa8ea" stroke-width="2.8"/><path d="M4 21 Q0 17 7 9 Q15 1 21 1.5 Q24 3 20 9 Q22 3 19.5 3 Q14 3 8 10 Q2 17 5 20.5 Q7 22 12 19.5 Q6 23.5 4 21Z" fill="#f0c030"/></g><g transform="translate(207.5,868)"><path d="M2 16 Q-1 9 6 6 Q14 3 19 8 Q22 12 17 15 Q13 17 15 20 Q12 23 7 21 Q3 20 2 16Z" fill="#d8e6f0"/><circle cx="5" cy="12.5" r="1.8" fill="#e0503a"/><circle cx="8" cy="8.8" r="1.8" fill="#5cb84a"/><circle cx="12" cy="7.5" r="1.8" fill="#f2a93a"/><circle cx="10.5" cy="13" r="1.3" fill="#1c2a44"/><path d="M11 23 L20 6" stroke="#e0a040" stroke-width="2"/><path d="M19 7 L22 1 L24.5 3 Z" fill="#f2c07a"/></g><g transform="translate(257,868)"><rect x="0" y="0" width="24" height="24" fill="#1a76d6"/><path d="M12 1.5 Q16 4 22 3.5 V11 Q21 19 12 22.5 Q3 19 2 11 V3.5 Q8 4 12 1.5Z" fill="#fff"/><path d="M12 2 V22.5 M2 11.5 H22" stroke="#1a76d6" stroke-width="1.6"/></g><g transform="translate(306,868) scale(0.52)"><defs><linearGradient id="ffg" x1="0" y1="0" x2="1" y2=".3"><stop offset="0" stop-color="#e8481e"/><stop offset=".55" stop-color="#f47a20"/><stop offset="1" stop-color="#ffd02e"/></linearGradient><linearGradient id="ffb" x1="0" y1="0" x2=".3" y2="1"><stop offset="0" stop-color="#4cc0f2"/><stop offset=".6" stop-color="#1f6fc0"/><stop offset="1" stop-color="#1a2f80"/></linearGradient></defs><circle cx="23.5" cy="20" r="17" fill="url(#ffb)"/><path d="M5 4 L10 10 Q16 8 21 5 Q20 10 24 12 Q21 14 22 17 Q19 21 23 25 Q27 27 32 25 Q28 30 21 30 Q14 29 12 22 Q10 14 8 13 Q2 22 4 30 Q8 42 22 44 Q36 44 42 32 Q46 22 40 10 Q41 24 33 31 Q38 20 34 13 Q36 24 28 29 Q22 30 18 26" fill="url(#ffg)"/><path d="M4 30 Q8 42 22 44 Q36 44 42 32 Q46 22 40 10 Q44 26 36 34 Q26 42 14 36 Q6 32 4 30Z" fill="#f06a22"/><path d="M40 10 Q46 22 42 32 Q40 36 36 34 Q44 26 40 10Z" fill="#ffc62e"/><path d="M5 4 L9 11 Q4 18 4 28 Q2 14 5 4Z" fill="#f26522"/><path d="M21 5 Q19 11 24 13 Q20 15 22 18 Q18 22 12 20 Q12 13 8 12 Q15 9 21 5Z" fill="#f58a24"/></g><g transform="translate(358.7,869)"><path d="M0 0 H11.5 L15.5 4 V21 H0Z" fill="#f2f2f4"/><path d="M11.5 0 V4 H15.5Z" fill="#c8c8cc"/></g><g transform="translate(404.8,868) scale(1.3875)"><defs><linearGradient id="dws404" x1="0" y1="0" x2="0" y2="1"><stop offset="0" stop-color="#eeeeee"/><stop offset="1" stop-color="#9a9a9a"/></linearGradient></defs><rect x="0" y="0" width="16" height="16" rx="2" fill="url(#dws404)"/><path d="M5 4 A3.2 3.2 0 0 1 11 4 L10 5.5 A2 2 0 0 0 6 5.5Z M3 2.5 L5.5 2.8 L4.5 4.5Z M13 2.5 L10.5 2.8 L11.5 4.5Z M1.5 6 L4.5 6 L3.5 8Z M14.5 6 L11.5 6 L12.5 8Z M2 11 L5 8 L5.5 13Z M14 11 L11 8 L10.5 13Z" fill="#111"/><circle cx="8.5" cy="8.5" r="4.2" fill="#bfe4f4" stroke="#333" stroke-width="1.2"/><path d="M11.5 11.5 L14.5 14.5" stroke="#222" stroke-width="1.6"/></g><path d="M1171 883.5L1177 877.5L1183 883.5" fill="none" stroke="#fff" stroke-width="1.2"/><g transform="translate(1193,872) scale(1.0)"><defs><linearGradient id="dws1193" x1="0" y1="0" x2="0" y2="1"><stop offset="0" stop-color="#eeeeee"/><stop offset="1" stop-color="#9a9a9a"/></linearGradient></defs><rect x="0" y="0" width="16" height="16" rx="2" fill="url(#dws1193)"/><path d="M5 4 A3.2 3.2 0 0 1 11 4 L10 5.5 A2 2 0 0 0 6 5.5Z M3 2.5 L5.5 2.8 L4.5 4.5Z M13 2.5 L10.5 2.8 L11.5 4.5Z M1.5 6 L4.5 6 L3.5 8Z M14.5 6 L11.5 6 L12.5 8Z M2 11 L5 8 L5.5 13Z M14 11 L11 8 L10.5 13Z" fill="#111"/><circle cx="8.5" cy="8.5" r="4.2" fill="#bfe4f4" stroke="#333" stroke-width="1.2"/><path d="M11.5 11.5 L14.5 14.5" stroke="#222" stroke-width="1.6"/></g><path d="M1220.5 878.5H1227.5V887.5H1220.5Z M1221.5 872.5H1226.5V878.5H1221.5Z" fill="none" stroke="#fff" stroke-width="1"/><path d="M1228 886L1230 888L1234 883" fill="none" stroke="#fff" stroke-width="1"/><rect x="1244.5" y="874.5" width="12" height="8" fill="none" stroke="#fff"/><path d="M1250.5 883V886.5M1246 887.5H1255M1241.5 876.5H1244M1241.5 879.5H1244" stroke="#fff"/><rect x="1241.5" y="874.5" width="3" height="3" fill="none" stroke="#fff"/><path d="M1265.5 877.5H1268.5L1272.5 873.5V886.5L1268.5 882.5H1265.5Z" fill="none" stroke="#fff"/><path d="M1275 877Q1277 880 1275 883M1277.5 875Q1281 880 1277.5 885M1280 873Q1284.5 880 1280 887" fill="none" stroke="#fff"/><path d="M1399.5 872.5H1415.5V884.5H1410L1407.5 887.5L1405 884.5H1399.5Z" fill="none" stroke="#fff" stroke-width="1.1"/><path d="M1435.5 860V900" stroke="#5a5570"/></svg>
<div class='t' style='left:1290.40px;top:874.00px;font-size:12px;color:#fff;font-weight:400;transform:scaleX(0.8960);'>ENG</div>
<div class='t' style='left:1339.49px;top:865.00px;font-size:12px;color:#fff;font-weight:400;transform:scaleX(0.9103);'>12:08</div>
<div class='t' style='left:1327.00px;top:883.00px;font-size:12px;color:#fff;font-weight:400;transform:scaleX(0.9000);'>10.08.2017</div>
</body></html>
